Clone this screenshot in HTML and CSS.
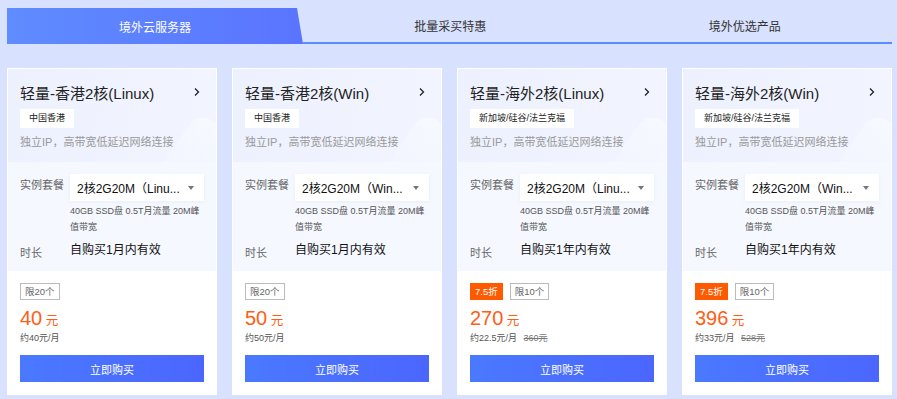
FILE: index.html
```html
<!DOCTYPE html>
<html lang="zh-CN">
    <head>
        <meta charset="utf-8">
        <meta name="viewport" content="width=device-width, initial-scale=1.0">
        <title>境外云服务器</title>

        <link rel="stylesheet" href="styles.css">
    </head>
    <body>
        <main class="page">
            <nav class="tabs">
                <div class="tab active">境外云服务器</div>
                <div class="tab">批量采买特惠</div>
                <div class="tab">境外优选产品</div>
            </nav>

            <section class="cards">
                <div class="card">
                    <div class="card-head">
                        <div class="title-row">
                            <span class="title">轻量-香港2核(Linux)</span>
                            <svg class="chevron" width="6" height="10" viewBox="0 0 6 10"><path d="M1 1.5l3.5 3.5-3.5 3.5" fill="none" stroke="#222" stroke-width="1.3"/></svg>
                        </div>
                        <span class="region">中国香港</span>
                        <p class="desc">独立IP，高带宽低延迟网络连接</p>
                    </div>
                    <div class="card-body">
                        <div class="row">
                            <span class="label">实例套餐</span>
                            <div class="field">
                                <div class="select"><span class="select-text">2核2G20M（Linu...</span><span class="caret"></span></div>
                                <p class="spec">40GB SSD盘 0.5T月流量 20M峰值带宽</p>
                            </div>
                        </div>
                        <div class="row">
                            <span class="label">时长</span>
                            <span class="value">自购买1月内有效</span>
                        </div>
                    </div>
                    <div class="card-foot">
                        <div class="tags"><span class="limit">限20个</span></div>
                        <div class="price"><b>40</b> 元</div>
                        <div class="monthly">约40元/月</div>
                        <button class="buy" type="button">立即购买</button>
                    </div>
                </div>

                <div class="card">
                    <div class="card-head">
                        <div class="title-row">
                            <span class="title">轻量-香港2核(Win)</span>
                            <svg class="chevron" width="6" height="10" viewBox="0 0 6 10"><path d="M1 1.5l3.5 3.5-3.5 3.5" fill="none" stroke="#222" stroke-width="1.3"/></svg>
                        </div>
                        <span class="region">中国香港</span>
                        <p class="desc">独立IP，高带宽低延迟网络连接</p>
                    </div>
                    <div class="card-body">
                        <div class="row">
                            <span class="label">实例套餐</span>
                            <div class="field">
                                <div class="select"><span class="select-text">2核2G20M（Win...</span><span class="caret"></span></div>
                                <p class="spec">40GB SSD盘 0.5T月流量 20M峰值带宽</p>
                            </div>
                        </div>
                        <div class="row">
                            <span class="label">时长</span>
                            <span class="value">自购买1月内有效</span>
                        </div>
                    </div>
                    <div class="card-foot">
                        <div class="tags"><span class="limit">限20个</span></div>
                        <div class="price"><b>50</b> 元</div>
                        <div class="monthly">约50元/月</div>
                        <button class="buy" type="button">立即购买</button>
                    </div>
                </div>

                <div class="card">
                    <div class="card-head">
                        <div class="title-row">
                            <span class="title">轻量-海外2核(Linux)</span>
                            <svg class="chevron" width="6" height="10" viewBox="0 0 6 10"><path d="M1 1.5l3.5 3.5-3.5 3.5" fill="none" stroke="#222" stroke-width="1.3"/></svg>
                        </div>
                        <span class="region">新加坡/硅谷/法兰克福</span>
                        <p class="desc">独立IP，高带宽低延迟网络连接</p>
                    </div>
                    <div class="card-body">
                        <div class="row">
                            <span class="label">实例套餐</span>
                            <div class="field">
                                <div class="select"><span class="select-text">2核2G20M（Linu...</span><span class="caret"></span></div>
                                <p class="spec">40GB SSD盘 0.5T月流量 20M峰值带宽</p>
                            </div>
                        </div>
                        <div class="row">
                            <span class="label">时长</span>
                            <span class="value">自购买1年内有效</span>
                        </div>
                    </div>
                    <div class="card-foot">
                        <div class="tags"><span class="discount">7.5折</span><span class="limit">限10个</span></div>
                        <div class="price"><b>270</b> 元</div>
                        <div class="monthly">约22.5元/月 <s>360元</s></div>
                        <button class="buy" type="button">立即购买</button>
                    </div>
                </div>

                <div class="card">
                    <div class="card-head">
                        <div class="title-row">
                            <span class="title">轻量-海外2核(Win)</span>
                            <svg class="chevron" width="6" height="10" viewBox="0 0 6 10"><path d="M1 1.5l3.5 3.5-3.5 3.5" fill="none" stroke="#222" stroke-width="1.3"/></svg>
                        </div>
                        <span class="region">新加坡/硅谷/法兰克福</span>
                        <p class="desc">独立IP，高带宽低延迟网络连接</p>
                    </div>
                    <div class="card-body">
                        <div class="row">
                            <span class="label">实例套餐</span>
                            <div class="field">
                                <div class="select"><span class="select-text">2核2G20M（Win...</span><span class="caret"></span></div>
                                <p class="spec">40GB SSD盘 0.5T月流量 20M峰值带宽</p>
                            </div>
                        </div>
                        <div class="row">
                            <span class="label">时长</span>
                            <span class="value">自购买1年内有效</span>
                        </div>
                    </div>
                    <div class="card-foot">
                        <div class="tags"><span class="discount">7.5折</span><span class="limit">限10个</span></div>
                        <div class="price"><b>396</b> 元</div>
                        <div class="monthly">约33元/月 <s>528元</s></div>
                        <button class="buy" type="button">立即购买</button>
                    </div>
                </div>
            </section>
        </main>
    </body>
</html>
```

FILE: styles.css
```css
* {
    box-sizing: border-box;
}
body {
    margin: 0;
    background: #d8e1fd;
    font-family: "Liberation Sans", "Noto Sans CJK SC", sans-serif;
    color: #333;
}
.page {
    padding: 8px 5px 0 7px;
}

/* tabs */
.tabs {
    display: flex;
    height: 36px;
}
.tab {
    flex: 1;
    display: flex;
    align-items: center;
    justify-content: center;
    font-size: 12px;
    color: #333;
    border-bottom: 2px solid #5b8cff;
}
.tab.active {
    flex: none;
    width: 296px;
    color: #fff;
    border-bottom: none;
    background: linear-gradient(90deg, #5f8cff, #5a74ff);
    clip-path: polygon(0 0, 290px 0, 100% 100%, 0 100%);
}

/* cards */
.cards {
    display: grid;
    grid-template-columns: repeat(4, 210px);
    gap: 15px;
    margin-top: 24px;
}
.card {
    display: flex;
    flex-direction: column;
    height: 327px;
    background: #fff;
    border: 1px solid #fff;
}
.card-head {
    position: relative;
    overflow: hidden;
    height: 93px;
    padding: 13px 12px 0;
    background: linear-gradient(90deg, #edf1fe, #f2f5ff);
}
.card-head > * {
    position: relative;
    z-index: 1;
}
.card-head::after {
    content: "";
    position: absolute;
    right: -45px;
    top: 62px;
    width: 100px;
    height: 100px;
    border-radius: 16px;
    transform: rotate(35deg);
    background: linear-gradient(170deg, rgba(255, 255, 255, 0.4), rgba(230, 236, 253, 0.2));
}
.title-row {
    display: flex;
    align-items: center;
    justify-content: space-between;
    height: 20px;
    padding-right: 4px;
}
.title {
    font-size: 15px;
    color: #222;
}
.region {
    display: inline-block;
    margin-top: 7px;
    height: 19px;
    line-height: 19px;
    padding: 0 9px;
    font-size: 9px;
    color: #222;
    background: #fff;
}
.desc {
    margin: 6px 0 0;
    font-size: 11px;
    line-height: 16px;
    color: #999;
}
.card-body {
    height: 109px;
    padding: 12px 12px 0;
    background: #f5f8ff;
}
.row {
    display: flex;
}
.row + .row {
    margin-top: 7px;
}
.label {
    width: 50px;
    flex: none;
    font-size: 11px;
    line-height: 22px;
    color: #666;
}
.field {
    width: 134px;
}
.select {
    display: flex;
    align-items: center;
    height: 27px;
    padding: 0 10px 0 7px;
    background: #fff;
    box-shadow: 0 1px 4px rgba(90, 110, 180, 0.08);
}
.select-text {
    flex: 1;
    white-space: nowrap;
    font-size: 12px;
    color: #111;
}
.caret {
    border-left: 3px solid transparent;
    border-right: 3px solid transparent;
    border-top: 4px solid #777;
}
.spec {
    margin: 2px 0 0;
    font-size: 9px;
    line-height: 16px;
    color: #555;
}
.value {
    font-size: 12px;
    line-height: 16px;
    color: #111;
}
.card-foot {
    flex: 1;
    padding: 12px 12px 0;
}
.tags {
    display: flex;
    gap: 7px;
    height: 17px;
}
.limit, .discount {
    height: 17px;
    line-height: 15px;
    padding: 0 4px;
    font-size: 9.5px;
    border: 1px solid #bbb;
    color: #666;
}
.discount {
    border-color: #ff5a00;
    background: #ff5a00;
    color: #fff;
}
.price {
    margin-top: 6px;
    height: 24px;
    line-height: 24px;
    font-size: 12.5px;
    color: #ff5e14;
}
.price b {
    font-weight: normal;
    font-size: 20px;
}
.monthly {
    height: 12px;
    line-height: 12px;
    margin-top: 2px;
    font-size: 9px;
    color: #555;
}
.monthly s {
    margin-left: 4px;
    color: #777;
}
.buy {
    display: block;
    width: 100%;
    height: 27px;
    margin-top: 11px;
    border: none;
    background: linear-gradient(90deg, #4a79ff, #4b66ff);
    color: #fff;
    font-family: inherit;
    font-size: 11px;
    cursor: pointer;
}
```
